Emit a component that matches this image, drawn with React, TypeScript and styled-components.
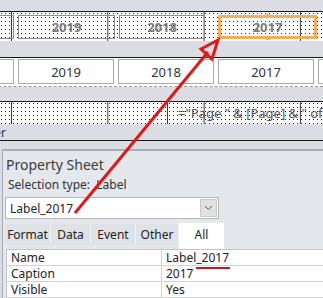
import styled, { createGlobalStyle } from 'styled-components'

const GlobalStyle = createGlobalStyle`
  html, body {
    margin: 0;
    padding: 0;
    background: #dcdde4;
  }
`;

const Frame = styled.div`
  position: relative;
  width: 323px;
  height: 298px;
  overflow: hidden;
  background: #dcdde4;
  font-family: "Noto Sans", "Open Sans", sans-serif;
`;

const Designer = styled.div`
  display: flex;
  flex-direction: column;
  border-bottom: 1px solid #1a1a1a;
`;

const Band = styled.div<{ $h: number }>`
  height: ${({ $h }) => $h}px;
  background: #dcdde4;
  font-size: 12px;
  color: #333;
  display: flex;
  align-items: center;
  overflow: hidden;
  white-space: nowrap;
`;

const BandTitle = styled.span`
  margin-left: -62px;
`;

const DottedSection = styled.div<{ $h: number }>`
  height: ${({ $h }) => $h}px;
  border-top: 1px solid #1a1a1a;
  background-color: #fff;
  background-image:
    linear-gradient(90deg, #3a3a3a 1px, transparent 1px),
    radial-gradient(circle at 1.5px 1.5px, #202020 0.7px, transparent 1px);
  background-size: 96.3px 100%, 4px 4px;
  background-position: 11px 0, 0 0;
  display: flex;
  align-items: flex-start;
  overflow: hidden;
`;

const DetailSection = styled.div`
  height: 27px;
  border-top: 1px solid #1a1a1a;
  border-bottom: 1px dashed #9a9a9a;
  background: #fff;
  display: flex;
  gap: 4px;
  padding-top: 1px;
  margin-left: -82px;
`;

const HeaderRow = styled.div`
  display: flex;
  gap: 4px;
  padding-top: 3px;
  margin-left: -82px;
`;

const HeaderLabel = styled.div<{ $w: number; $gapBefore?: number; $selected?: boolean }>`
  position: relative;
  box-sizing: border-box;
  width: ${({ $w }) => $w}px;
  flex: none;
  height: 24px;
  margin-left: ${({ $gapBefore }) => $gapBefore ?? 0}px;
  border: ${({ $selected }) => ($selected ? '3px solid #f4ad5a' : '1px solid #8c8c8c')};
  display: flex;
  align-items: center;
  justify-content: center;
  font-weight: 700;
  font-size: 13px;
  color: #7b7b7b;
`;

const Handle = styled.span<{ $top?: boolean }>`
  position: absolute;
  left: 50%;
  ${({ $top }) => ($top ? 'top: -4px;' : 'bottom: -4px;')}
  width: 4px;
  height: 4px;
  margin-left: -2px;
  background: #f4ad5a;
`;

const DetailBox = styled.div`
  box-sizing: border-box;
  width: 96px;
  flex: none;
  height: 25px;
  border: 1px solid #a9a9a9;
  display: flex;
  align-items: center;
  justify-content: center;
  font-size: 13px;
  color: #333;
`;

const FooterRow = styled.div`
  display: flex;
  height: 100%;
  padding-left: 167px;
`;

const FooterBox = styled.div`
  flex: 1;
  border-left: 1px solid #3a3a3a;
  padding-left: 10px;
  font-size: 13px;
  color: #555;
  line-height: 22px;
  white-space: nowrap;
`;

const Spacer = styled.div`
  height: 8px;
`;

const Sheet = styled.div`
  margin-left: 2px;
  border-top: 2px solid #a9adb5;
  border-left: 1px solid #a9adb5;
  background: #e4e7ec;
  height: 200px;
`;

const SheetTitle = styled.div`
  padding: 4px 0 0 3px;
  height: 19px;
  font-size: 14px;
  color: #3d3d3d;
`;

const SelectionType = styled.div`
  padding: 2px 0 0 5px;
  height: 19px;
  font-size: 12px;
  color: #333;
`;

const Combo = styled.div`
  margin: 2px 0 0 2px;
  width: 214px;
  height: 22px;
  box-sizing: border-box;
  border: 1px solid #b5b5b5;
  background: #fff;
  display: flex;
  align-items: center;
  justify-content: space-between;
  padding: 0 1px 0 4px;
  font-size: 12px;
  color: #222;
`;

const DropButton = styled.div`
  width: 15px;
  height: 16px;
  background: #e1e1e1;
  border: 1px solid #c9c9c9;
  display: flex;
  align-items: center;
  justify-content: center;
`;

const Tabs = styled.div`
  display: flex;
  margin: 5px 0 0 2px;
  height: 21px;
  align-items: flex-end;
`;

const Tab = styled.div<{ $w: number; $active?: boolean }>`
  width: ${({ $w }) => $w}px;
  height: ${({ $active }) => ($active ? 26 : 21)}px;
  box-sizing: border-box;
  background: ${({ $active }) => ($active ? '#fff' : '#dfe2e7')};
  border-right: ${({ $active }) => ($active ? 'none' : '1px solid #f2f3f5')};
  display: flex;
  align-items: ${({ $active }) => ($active ? 'flex-start' : 'center')};
  padding-top: ${({ $active }) => ($active ? 3 : 0)}px;
  justify-content: center;
  font-size: 12px;
  color: #222;
  align-self: flex-start;
  margin-top: ${({ $active }) => ($active ? -1 : 0)}px;
`;

const Grid = styled.div`
  margin: 4px 0 0 3px;
  background: #fff;
  border-top: 1px solid #c4c4c4;
  border-left: 1px solid #c4c4c4;
`;

const Row = styled.div`
  display: grid;
  grid-template-columns: 155px 1fr;
  height: 15px;
  border-bottom: 1px solid #d2d2d2;
  font-size: 12px;
  color: #222;
  line-height: 15px;
`;

const Cell = styled.div`
  padding-left: 4px;
  white-space: nowrap;
  &:first-child {
    border-right: 1px solid #d2d2d2;
  }
`;

const Marked = styled.span`
  position: relative;
`;

const RedMark = styled.span`
  position: absolute;
  left: 30px;
  right: -1px;
  bottom: -3px;
  height: 2px;
  background: #c8141c;
`;

const Overlay = styled.svg`
  position: absolute;
  left: 0;
  top: 0;
  pointer-events: none;
`;

const years = ['2019', '2018', '2017']

export default function App() {
	return (
		<>
			<GlobalStyle />
			<Frame>
				<Designer>
					<Band $h={11} />
					<DottedSection $h={29}>
						<HeaderRow>
							<HeaderLabel $w={96} />
							<HeaderLabel $w={97}>2019</HeaderLabel>
							<HeaderLabel $w={86}>2018</HeaderLabel>
							<HeaderLabel $w={99} $gapBefore={9} $selected>
								2017
								<Handle $top />
								<Handle />
							</HeaderLabel>
						</HeaderRow>
					</DottedSection>
					<Band $h={16} />
					<DetailSection>
						<DetailBox />
						{years.map((y) => (
							<DetailBox key={y}>{y}</DetailBox>
						))}
						<DetailBox />
					</DetailSection>
					<Band $h={14} />
					<DottedSection $h={22}>
						<FooterRow>
							<FooterBox>="Page " &amp; [Page] &amp; " of " &amp; [Pages]</FooterBox>
						</FooterRow>
					</DottedSection>
					<Band $h={16}>
						<BandTitle>Page Footer</BandTitle>
					</Band>
				</Designer>
				<Spacer />
				<Sheet>
					<SheetTitle>Property Sheet</SheetTitle>
					<SelectionType>Selection type:&nbsp; Label</SelectionType>
					<Combo>
						Label_2017
						<DropButton>
							<svg width="9" height="6" viewBox="0 0 9 6">
								<path d="M1 1 L4.5 4.5 L8 1" fill="none" stroke="#555" strokeWidth="1" />
							</svg>
						</DropButton>
					</Combo>
					<Tabs>
						<Tab $w={46}>Format</Tab>
						<Tab $w={40}>Data</Tab>
						<Tab $w={45}>Event</Tab>
						<Tab $w={43}>Other</Tab>
						<Tab $w={45} $active>All</Tab>
					</Tabs>
					<Grid>
						<Row>
							<Cell>Name</Cell>
							<Cell>
								<Marked>
									Label_2017
									<RedMark />
								</Marked>
							</Cell>
						</Row>
						<Row>
							<Cell>Caption</Cell>
							<Cell>2017</Cell>
						</Row>
						<Row>
							<Cell>Visible</Cell>
							<Cell>Yes</Cell>
						</Row>
						<Row>
							<Cell />
							<Cell />
						</Row>
					</Grid>
				</Sheet>
				<Overlay width="323" height="298" viewBox="0 0 323 298">
					<line x1="75" y1="213" x2="208" y2="52" stroke="#dd1a1a" strokeWidth="3" />
					<polygon
						points="218,40 201,49 212,59"
						fill="none"
						stroke="#dd1a1a"
						strokeWidth="3"
						strokeLinejoin="miter"
					/>
				</Overlay>
			</Frame>
		</>
	)
}
